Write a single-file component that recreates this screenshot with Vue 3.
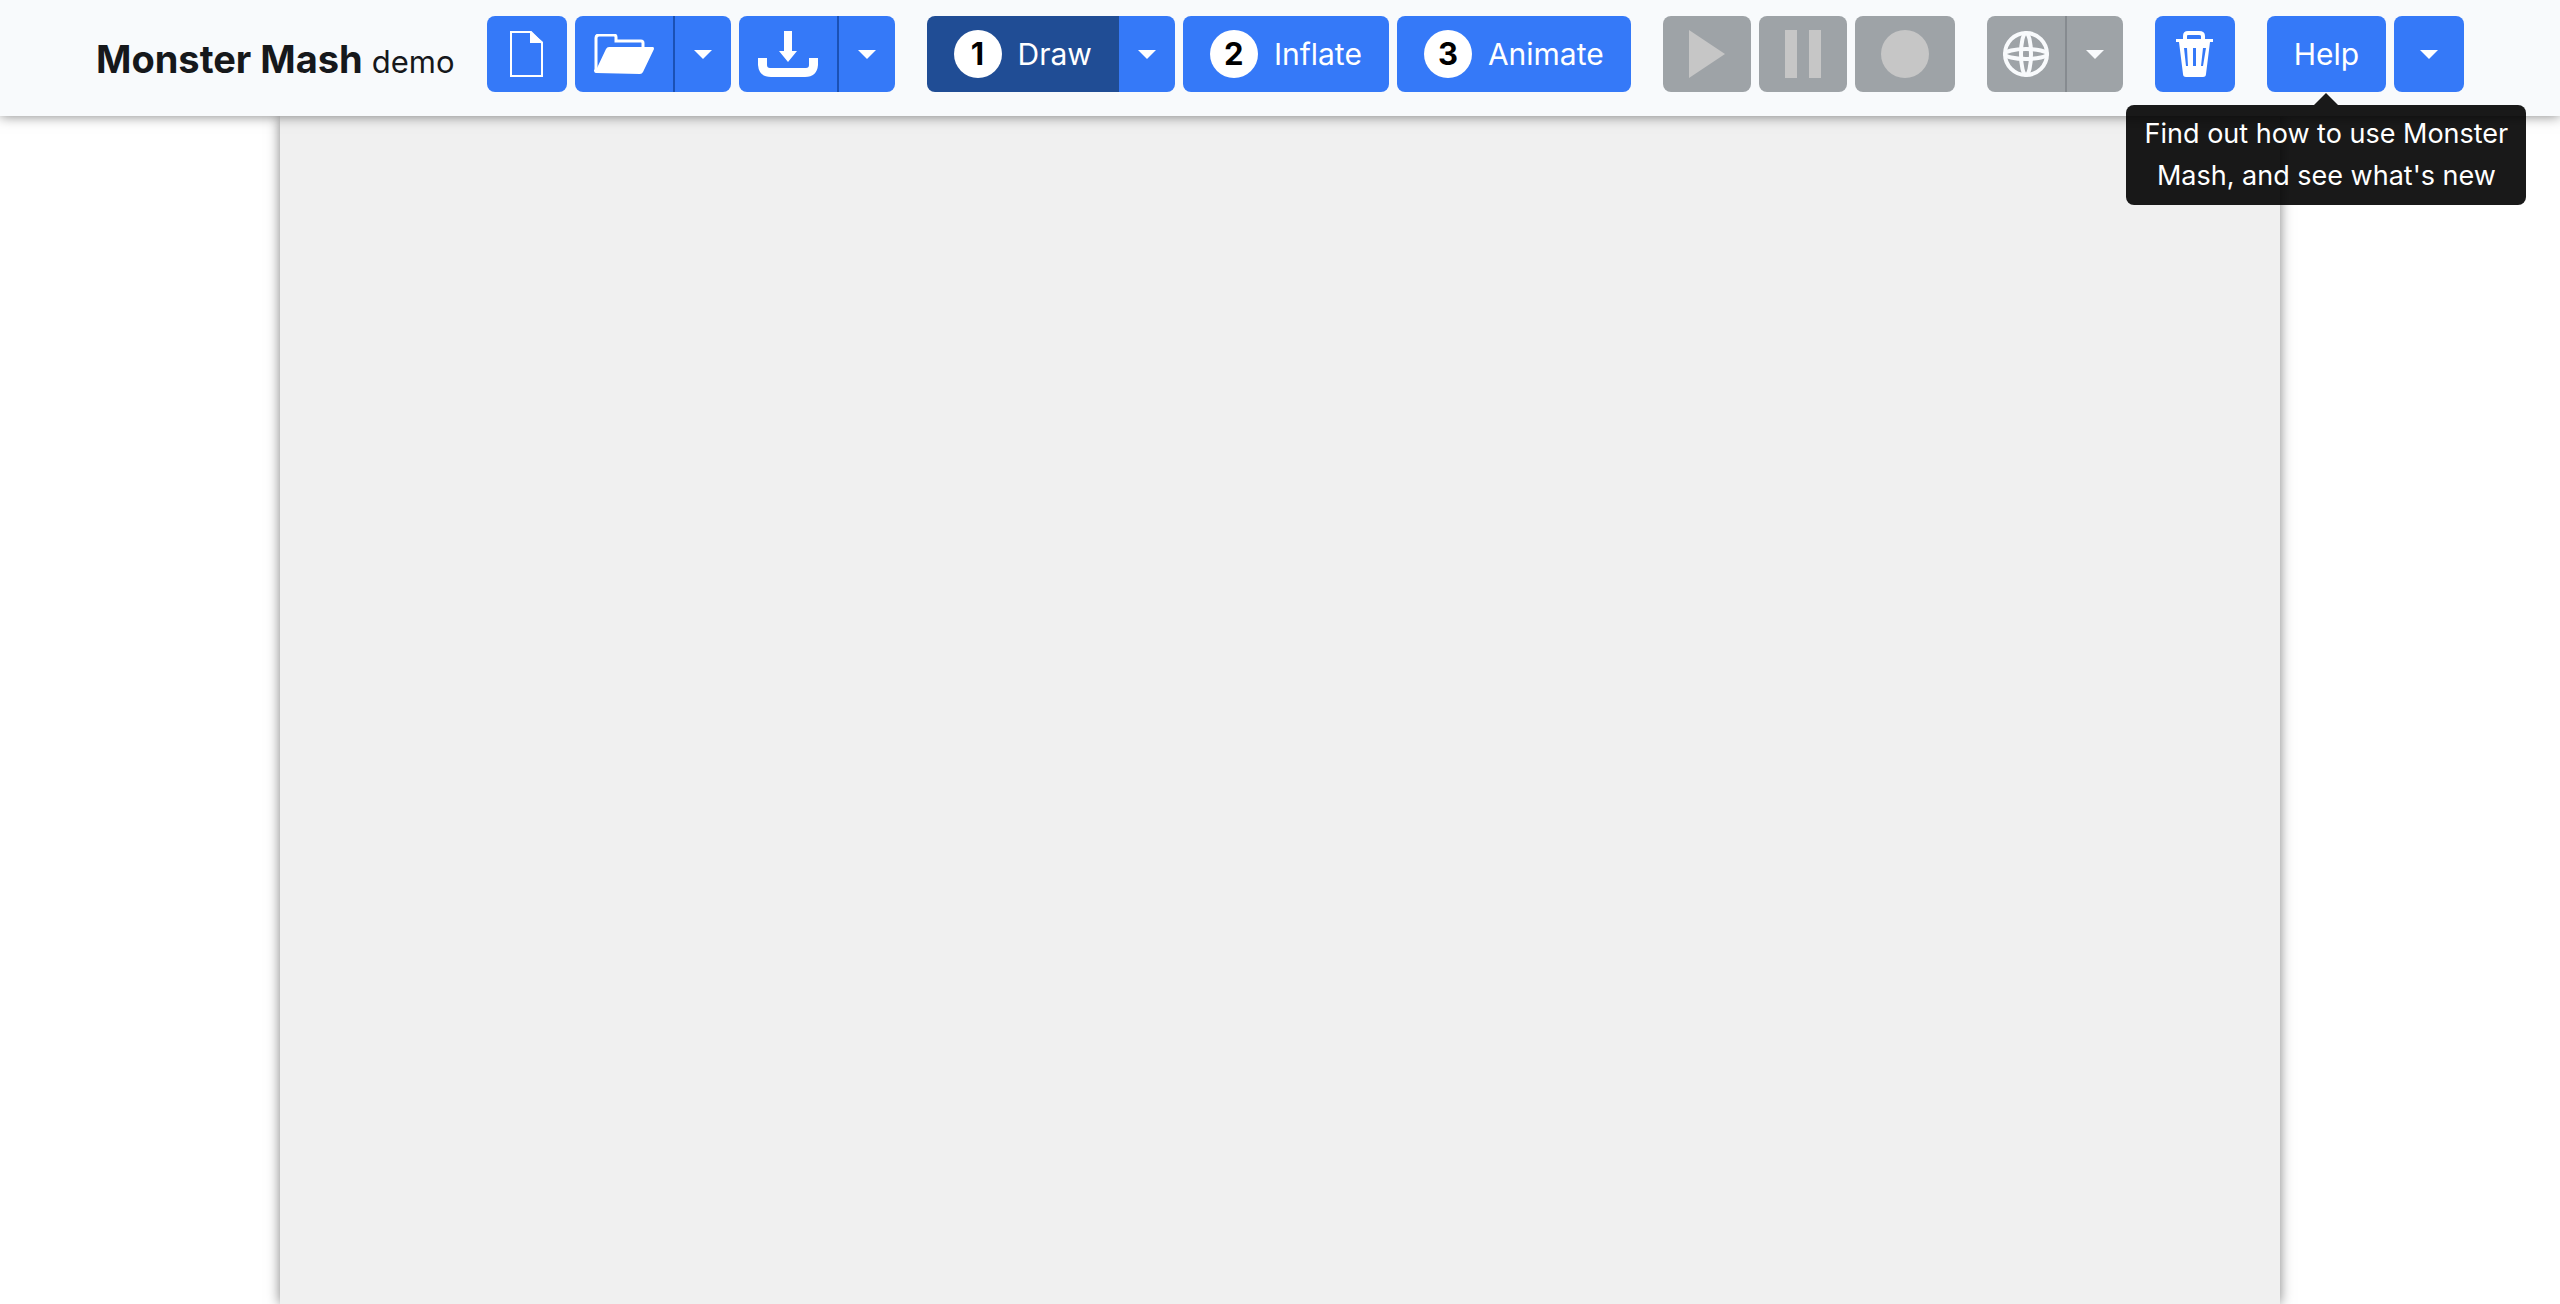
<template>
  <header class="navbar">
    <h1 class="brand">Monster Mash <small>demo</small></h1>

    <div class="tools">
      <button class="btn square" aria-label="New">
        <svg width="34" height="46" viewBox="0 0 34 46">
          <path d="M1 1H21L32 12V45H1Z" fill="none" stroke="currentColor" stroke-width="2" />
          <path d="M20 0L33 11V12H20Z" fill="currentColor" />
        </svg>
      </button>
      <div class="split">
        <button class="btn file" aria-label="Open">
          <svg width="60" height="40" viewBox="0 0 60 40">
            <path d="M2 37V4Q2 1 5 1H20Q22 1 22 3V7H47Q49 7 49 9V14" fill="none" stroke="currentColor" stroke-width="3" />
            <path d="M15 13H59Q60 13 60 15L49 38Q48 40 46 40L2 39Q0 39 0 36L3 34L12 15Q13 13 15 13Z" fill="currentColor" />
          </svg>
        </button>
        <button class="btn caret divided" aria-label="Open menu"></button>
      </div>
      <div class="split">
        <button class="btn file" aria-label="Save">
          <svg width="60" height="46" viewBox="0 0 60 46">
            <path d="M26 0H34V20H39L30 31L21 20H26Z" fill="currentColor" />
            <path d="M0 27H9V34Q9 37 12 37H48Q51 37 51 34V27H60V34Q59 46 47 46H13Q1 46 0 34Z" fill="currentColor" />
          </svg>
        </button>
        <button class="btn caret divided" aria-label="Save menu"></button>
      </div>
    </div>

    <div class="tools">
      <div v-for="step in steps" :key="step.name" class="split">
        <button class="btn step" :class="{ active: mode === step.name }" @click="mode = step.name">
          <span class="number">{{ step.number }}</span>
          {{ step.name }}
        </button>
        <button v-if="step.menu" class="btn caret" :aria-label="step.name + ' menu'"></button>
      </div>
    </div>

    <div class="tools">
      <button class="btn media" disabled aria-label="Play">
        <svg width="36" height="48" viewBox="0 0 36 48"><path d="M0 0L36 24L0 48Z" fill="currentColor" /></svg>
      </button>
      <button class="btn media" disabled aria-label="Pause">
        <svg width="36" height="48" viewBox="0 0 36 48"><path d="M0 0H12V48H0ZM24 0H36V48H24Z" fill="currentColor" /></svg>
      </button>
      <button class="btn media" disabled aria-label="Record">
        <svg width="48" height="48" viewBox="0 0 48 48"><circle cx="24" cy="24" r="24" fill="currentColor" /></svg>
      </button>
    </div>

    <div class="tools">
      <div class="split">
        <button class="btn globe muted" aria-label="Export">
          <svg width="46" height="46" viewBox="0 0 46 46" fill="none" stroke="currentColor" stroke-width="4">
            <circle cx="23" cy="23" r="21" />
            <ellipse cx="23" cy="23" rx="5" ry="21" />
            <ellipse cx="23" cy="23" rx="21" ry="5" />
          </svg>
        </button>
        <button class="btn caret muted divided" aria-label="Export menu"></button>
      </div>
    </div>

    <div class="tools">
      <button class="btn square" aria-label="Delete">
        <svg width="38" height="46" viewBox="0 0 38 46">
          <path d="M9 9V5Q9 2 12 2H23Q27 2 27 5V9" fill="none" stroke="currentColor" stroke-width="4" />
          <path
            fill="currentColor"
            fill-rule="evenodd"
            d="M0 8H37V11H34L30 43Q30 46 27 46H10Q7 46 7 43L3 11H0ZM8 17L10 35H12L11 17ZM17 17V35H20V17ZM27 17L25 35H27L30 17Z"
          />
        </svg>
      </button>
    </div>

    <div class="tools">
      <div class="help">
        <button class="btn text" aria-describedby="help-tip">Help</button>
        <div id="help-tip" class="tooltip" role="tooltip">Find out how to use Monster Mash, and see what's new</div>
      </div>
      <button class="btn caret wide" aria-label="Help menu"></button>
    </div>
  </header>
  <main class="stage"></main>
</template>

<script setup>
import { ref } from 'vue'

const mode = ref('Draw')
const steps = [
  { number: 1, name: 'Draw', menu: true },
  { number: 2, name: 'Inflate' },
  { number: 3, name: 'Animate' },
]
</script>

<style>
body {
  background: #fff;
}
#app {
  display: flex;
  flex-direction: column;
  min-height: 100vh;
  font-family: Inter, "Liberation Sans", sans-serif;
}
</style>

<style scoped>
.navbar {
  position: relative;
  z-index: 1;
  display: flex;
  align-items: flex-start;
  gap: 32px;
  box-sizing: border-box;
  height: 116px;
  padding: 16px 96px;
  background: #f8fafc;
  box-shadow: 0 0 12px rgba(0, 0, 0, 0.5);
}
.brand {
  flex: 1;
  margin: 0;
  color: #16181b;
  font-size: 38px;
  font-weight: 700;
  line-height: 86px;
  white-space: nowrap;
}
.brand small {
  font-size: 31px;
  font-weight: 400;
}
.tools {
  display: flex;
  gap: 8px;
}
.split {
  display: flex;
}
.btn {
  display: flex;
  align-items: center;
  justify-content: center;
  box-sizing: border-box;
  height: 76px;
  padding: 0 26px;
  border: 0;
  border-radius: 8px;
  background: #3579f8;
  color: #fff;
  font-family: inherit;
  font-size: 30px;
  white-space: nowrap;
  cursor: pointer;
}
.btn.square {
  width: 80px;
  padding: 0;
}
.btn.globe {
  width: 78px;
  padding: 0;
}
.btn.file {
  width: 98px;
  padding: 0;
}
.split .btn:not(:last-child) {
  border-top-right-radius: 0;
  border-bottom-right-radius: 0;
}
.split .btn + .btn {
  border-top-left-radius: 0;
  border-bottom-left-radius: 0;
}
.btn.step {
  gap: 16px;
  padding: 0 27px;
}
.btn.text {
  padding: 0 27px;
}
.btn.active {
  background: #204d95;
}
.number {
  width: 48px;
  border-radius: 50%;
  background: #fff;
  color: #000;
  font-size: 31px;
  font-weight: 700;
  line-height: 48px;
  text-align: center;
}
.btn.caret {
  width: 56px;
  padding: 0;
}
.btn.caret::after {
  content: "";
  border: 9px solid transparent;
  border-top-color: currentColor;
  border-bottom: 0;
}
.btn.caret.divided {
  width: 58px;
  border-left: 2px solid #1b51b5;
}
.btn.caret.wide {
  width: 70px;
}
.btn.muted {
  background: #9ea3a7;
  color: #f8fafc;
}
.btn.muted.divided {
  border-left-color: #868b90;
}
.btn:disabled {
  background: #9ea3a7;
  color: #c6c6c6;
  cursor: default;
}
.help {
  position: relative;
}
.tooltip {
  position: absolute;
  top: 89px;
  left: 50%;
  box-sizing: border-box;
  width: 400px;
  padding: 8px 16px;
  border-radius: 8px;
  transform: translateX(-50%);
  background: rgba(0, 0, 0, 0.9);
  color: #fff;
  font-size: 27px;
  line-height: 42px;
  text-align: center;
}
.tooltip::before {
  content: "";
  position: absolute;
  bottom: 100%;
  left: 50%;
  margin-left: -12px;
  border: 12px solid transparent;
  border-top: 0;
  border-bottom-color: rgba(0, 0, 0, 0.9);
}
.stage {
  flex: 1;
  box-sizing: border-box;
  width: 100%;
  max-width: 2000px;
  margin: 0 auto;
  background: #f0f0f0;
  box-shadow: 0 0 12px rgba(0, 0, 0, 0.5);
}
</style>
